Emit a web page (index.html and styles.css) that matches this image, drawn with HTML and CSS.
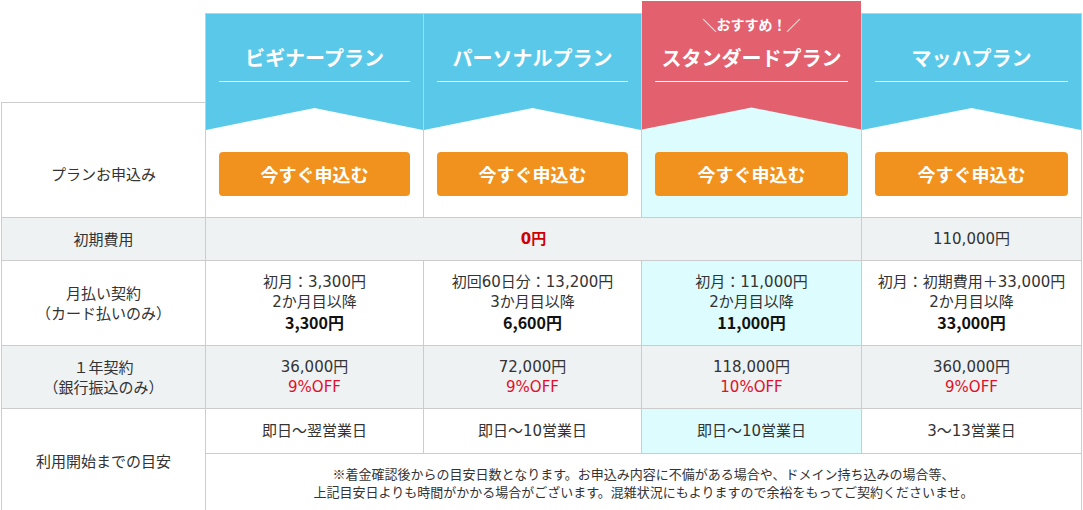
FILE: index.html
```html
<!DOCTYPE html>
<html lang="ja">
<head>
<meta charset="utf-8">
<title>料金プラン</title>
<link rel="stylesheet" href="styles.css">
</head>
<body>
<table class="price">
  <colgroup>
    <col class="c-label">
    <col class="c-plan">
    <col class="c-plan">
    <col class="c-plan2">
    <col class="c-plan2">
  </colgroup>
  <tr class="r-top">
    <td class="corner"></td>
    <th class="plan" rowspan="2">
      <div class="plan-head">
        <div class="plan-title">ビギナープラン</div>
      </div>
      <div class="plan-btn-wrap"><a class="plan-btn" href="#">今すぐ申込む</a></div>
    </th>
    <th class="plan" rowspan="2">
      <div class="plan-head">
        <div class="plan-title">パーソナルプラン</div>
      </div>
      <div class="plan-btn-wrap"><a class="plan-btn" href="#">今すぐ申込む</a></div>
    </th>
    <th class="plan plan-rec" rowspan="2">
      <div class="plan-head">
        <div class="plan-rec-label">＼おすすめ！／</div>
        <div class="plan-title">スタンダードプラン</div>
      </div>
      <div class="plan-btn-wrap"><a class="plan-btn" href="#">今すぐ申込む</a></div>
    </th>
    <th class="plan" rowspan="2">
      <div class="plan-head">
        <div class="plan-title">マッハプラン</div>
      </div>
      <div class="plan-btn-wrap"><a class="plan-btn" href="#">今すぐ申込む</a></div>
    </th>
  </tr>
  <tr class="r-apply">
    <td class="label label-apply">プランお申込み</td>
  </tr>
  <tr class="gray">
    <td class="label">初期費用</td>
    <td colspan="3"><span class="free">0円</span></td>
    <td>110,000円</td>
  </tr>
  <tr>
    <td class="label">月払い契約<br>（カード払いのみ）</td>
    <td>初月：3,300円<br>2か月目以降<br><strong>3,300円</strong></td>
    <td>初回60日分：13,200円<br>3か月目以降<br><strong>6,600円</strong></td>
    <td class="rec">初月：11,000円<br>2か月目以降<br><strong>11,000円</strong></td>
    <td>初月：初期費用＋33,000円<br>2か月目以降<br><strong>33,000円</strong></td>
  </tr>
  <tr class="gray">
    <td class="label">１年契約<br>（銀行振込のみ）</td>
    <td>36,000円<br><span class="off">9%OFF</span></td>
    <td>72,000円<br><span class="off">9%OFF</span></td>
    <td>118,000円<br><span class="off">10%OFF</span></td>
    <td>360,000円<br><span class="off">9%OFF</span></td>
  </tr>
  <tr class="r-start">
    <td class="label" rowspan="2">利用開始までの目安</td>
    <td>即日～翌営業日</td>
    <td>即日～10営業日</td>
    <td class="rec">即日～10営業日</td>
    <td>3～13営業日</td>
  </tr>
  <tr>
    <td class="note" colspan="4">※着金確認後からの目安日数となります。お申込み内容に不備がある場合や、ドメイン持ち込みの場合等、<br>上記目安日よりも時間がかかる場合がございます。混雑状況にもよりますので余裕をもってご契約くださいませ。</td>
  </tr>
</table>
</body>
</html>
```
FILE: styles.css
```css
html, body {
  margin: 0;
  padding: 0;
  background: #fff;
}
body {
  font-family: "DejaVu Sans", "Noto Sans CJK JP", sans-serif;
  color: #333;
  font-size: 15px;
  line-height: 20px;
}
.price {
  border-collapse: collapse;
  table-layout: fixed;
  width: 1081px;
  margin: 13px 0 0 1px;
}
.c-label { width: 204px; }
.c-plan { width: 218px; }
.c-plan2 { width: 220px; }

.price td, .price th {
  border: 1px solid #ccc;
  text-align: center;
  vertical-align: middle;
  padding: 11px 4px;
}
.price td.corner {
  border-top: hidden;
  border-left: hidden;
  height: 88px;
  padding: 0;
}
.price th.plan {
  padding: 0;
  vertical-align: top;
  font-weight: normal;
  font-family: "Noto Sans CJK JP", sans-serif;
}
.price th.plan-rec {
  border-top: hidden;
  background: #dcfcfd;
}
.plan-head {
  background: #5ac9e9;
  height: 116px;
  box-sizing: border-box;
  padding-top: 29px;
  clip-path: polygon(0 0, 100% 0, 100% 100%, 50% 94px, 0 100%);
  color: #fff;
}
.plan-rec .plan-head {
  background: #e3606f;
  height: 129px;
  margin-top: -13px;
  padding-top: 13px;
  clip-path: polygon(0 0, 100% 0, 100% 100%, 50% 107px, 0 100%);
}
.plan-rec-label {
  font-size: 14px;
  font-weight: bold;
  line-height: 20px;
  margin-bottom: 9px;
}
.plan-title {
  margin: 0 13px;
  font-size: 20px;
  font-weight: bold;
  line-height: 30px;
  padding-bottom: 8px;
  border-bottom: 1px solid #fff;
}
.plan-btn-wrap {
  padding: 22px 13px 21px;
}
.plan-btn {
  display: flex;
  align-items: center;
  justify-content: center;
  height: 44px;
  border-radius: 4px;
  background: #f2921e;
  color: #fff;
  font-size: 18px;
  font-weight: bold;
  text-decoration: none;
}
.price td.label {
  padding: 11px 4px;
  font-family: "Noto Sans CJK JP", sans-serif;
}
.price td.label-apply {
  vertical-align: bottom;
  padding-bottom: 33px;
}
.gray td {
  background: #eef2f3;
}
.price td.rec {
  background: #dcfcfd;
}
.r-start td {
  padding-top: 12px;
  padding-bottom: 12px;
}
.free {
  color: #d00000;
  font-weight: bold;
}
.off {
  color: #e0102a;
}
strong {
  font-family: "Noto Sans CJK JP", sans-serif;
  font-size: 16px;
  font-weight: bold;
  color: #111;
}
.price td.note {
  font-family: "Noto Sans CJK JP", sans-serif;
  font-size: 13px;
  line-height: 18px;
  padding: 11px 4px 12px;
}
```
